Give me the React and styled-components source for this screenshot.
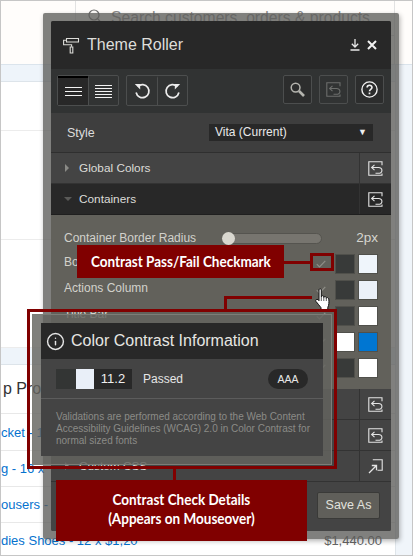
import React from "react";
import styled, { createGlobalStyle } from "styled-components";
import { Info } from "lucide-react";

const SWATCHES = [
  { label: "Body", left: "#383a39", right: "#eff5fb" },
  { label: "Actions Column", left: "#383a39", right: "#ebf1f9" },
  { label: "Title Bar", left: "#3d3f3e", right: "#ffffff" },
  { label: "", left: "#ffffff", right: "#0076d2" },
  { label: "", left: "#383a39", right: "#ffffff" },
];

const App = () => {
  return (
    <Page>
      <GlobalStyle />
      <TopBar>
        <SearchColumn>
          <SearchBox>
            <svg width="15" height="17" viewBox="0 0 15 17" fill="none" stroke="#6f6f6f" strokeWidth="1.2">
              <circle cx="7" cy="6" r="5" />
              <path d="M10.6 9.6 14 13.5" />
            </svg>
            <SearchText>Search customers, orders &amp; products</SearchText>
          </SearchBox>
        </SearchColumn>
      </TopBar>
      <Band $height={17} />
      <PageRow $height={49} />
      <PageRow $height={109} />
      <PageRow $height={108} />
      <Band $height={17} />
      <TableRow $height={49}><TitleText>p Pro</TitleText></TableRow>
      <TableRow $height={37}><LinkText>cket - 1</LinkText></TableRow>
      <TableRow $height={36}><LinkText>g - 16 x</LinkText></TableRow>
      <TableRow $height={36}><LinkText>ousers - 2</LinkText></TableRow>
      <TableRow $height={36}>
        <LinkText>dies Shoes - 12 x $1,20</LinkText>
        <Price>$1,440.00</Price>
      </TableRow>
      <SideColumn />

      <Frame>
        <Dialog>
          <Header>
            <HeaderTitle>
              <RollerIcon />
              Theme Roller
            </HeaderTitle>
            <HeaderActions>
              <DownloadIcon />
              <CloseIcon />
            </HeaderActions>
          </Header>
          <Toolbar>
            <ButtonGroup>
              <ToolButton $active>
                <LinesIcon count={3} />
              </ToolButton>
              <ToolButton>
                <LinesIcon count={5} />
              </ToolButton>
            </ButtonGroup>
            <ButtonGroup>
              <ToolButton>
                <TurnIcon />
              </ToolButton>
              <ToolButton>
                <TurnIcon $mirror />
              </ToolButton>
            </ButtonGroup>
            <ToolSpacer />
            <SquareButton>
              <MagnifierIcon />
            </SquareButton>
            <SquareButton $disabled>
              <RevertIcon size={15} color="#6c6e6c" />
            </SquareButton>
            <SquareButton>
              <HelpIcon />
            </SquareButton>
          </Toolbar>
          <StyleRow>
            <StyleLabel>Style</StyleLabel>
            <StyleSelect>
              Vita (Current)
              <SelectArrow>▼</SelectArrow>
            </StyleSelect>
          </StyleRow>
          <Section label="Global Colors" />
          <Section label="Containers" $open />
          <SectionBody>
            <RadiusRow>
              <RowLabel>Container Border Radius</RowLabel>
              <Track>
                <Thumb />
              </Track>
              <RadiusValue>2px</RadiusValue>
            </RadiusRow>
            {SWATCHES.map((row, i) => (
              <ColorRow key={i}>
                <RowLabel>{row.label}</RowLabel>
                <CheckIcon />
                <Swatch $color={row.left} />
                <Swatch $color={row.right} />
              </ColorRow>
            ))}
          </SectionBody>
          <Section label="" />
          <Section label="" />
          <Section label="Custom CSS" $external />
          <Footer>
            <SaveButton>Save As</SaveButton>
          </Footer>
        </Dialog>
      </Frame>

      <PassCallout>
        <CalloutText>Contrast Pass/Fail Checkmark</CalloutText>
      </PassCallout>
      <PassLine />
      <PassBox />

      <HoverLineH />
      <HoverLineV />
      <HandCursor />

      <InfoFrame>
        <InfoPopup>
          <InfoCard>
            <InfoHeader>
              <Info size={19} strokeWidth={1.8} color="#e6e6e6" />
              Color Contrast Information
            </InfoHeader>
            <ResultRow>
              <ResultChip>
                <ChipColor $color="#333534" $width={20} />
                <ChipColor $color="#e9eff8" $width={18} />
                <ChipValue>11.2</ChipValue>
              </ResultChip>
              <ResultText>Passed</ResultText>
              <Pill>AAA</Pill>
            </ResultRow>
            <InfoNote>
              Validations are performed according to the Web Content
              Accessibility Guidelines (WCAG) 2.0 in Color Contrast
              for normal sized fonts
            </InfoNote>
          </InfoCard>
        </InfoPopup>
      </InfoFrame>

      <DetailLine />
      <DetailCallout>
        <CalloutText>
          Contrast Check Details
          <br />
          (Appears on Mouseover)
        </CalloutText>
      </DetailCallout>
    </Page>
  );
};

export default App;

const Section = ({ label, $open, $external }) => (
  <SectionRow $open={$open}>
    <SectionTitle>
      <Caret $open={$open} />
      {label}
    </SectionTitle>
    <SectionAction>
      {$external ? <ExternalIcon /> : <RevertIcon size={15} color="#e4e4e4" />}
    </SectionAction>
  </SectionRow>
);

const RollerIcon = () => (
  <svg width="17" height="17" viewBox="0 0 17 17" fill="none" stroke="#dcdcd8" strokeWidth="1.1">
    <path d="M3.5 1.5h12v3.5h-12zM3.5 3.2H.6v4.6h8v2" />
    <path d="M7.2 10h2.6v6H7.200z" />
  </svg>
);

const DownloadIcon = () => (
  <svg width="10" height="12" viewBox="0 0 10 12" fill="none" stroke="#e8e8e8" strokeWidth="1.3">
    <path d="M5 0v7.500M1.800 4.800 5 8l3.200-3.200M.5 11h9" />
  </svg>
);

const CloseIcon = () => (
  <svg width="10" height="10" viewBox="0 0 10 10" fill="none" stroke="#f2f2f2" strokeWidth="2">
    <path d="M1 1l8 8M9 1l-8 8" />
  </svg>
);

const LinesIcon = ({ count }) => {
  const gap = count === 3 ? 4 : 3.2;
  return (
    <svg width="17" height="17" viewBox="0 0 17 17" stroke="#f2f2f2" strokeWidth="1">
      {Array.from({ length: count }).map((_, i) => {
        const y = Math.round(8 + (i - (count - 1) / 2) * gap) + 0.5;
        return <path key={i} d={`M0 ${y}h17`} />;
      })}
    </svg>
  );
};

const TurnIcon = ({ $mirror }) => (
  <svg
    width="17"
    height="17"
    viewBox="0 0 17 17"
    fill="none"
    stroke="#ececec"
    strokeWidth="1.700"
    style={$mirror ? { transform: "scaleX(-1)" } : undefined}
  >
    <path d="M3.800 3.600A6.500 6.500 0 1 1 2.100 9.500" />
    <path d="M.8 1h5.400v5.400z" fill="#ececec" stroke="none" />
  </svg>
);

const MagnifierIcon = () => (
  <svg width="15" height="15" viewBox="0 0 15 15" fill="none" stroke="#b4b4ae" strokeWidth="1.500">
    <circle cx="5.600" cy="5.600" r="4.400" />
    <path d="M9 9l5 5" strokeWidth="2.600" />
  </svg>
);

const RevertIcon = ({ size, color }) => (
  <svg width={size} height={size} viewBox="0 0 15 15" fill="none" stroke={color} strokeWidth="1.100">
    <path d="M14 4.200V.8H.8v13.400H14v-1.700" />
    <path d="M6.500 3.800 3.600 6.500l2.900 2.700M3.800 6.500h6.700c4.600 0 4.600 5.800-.3 5.800H7.500" />
  </svg>
);

const ExternalIcon = () => (
  <svg width="15" height="15" viewBox="0 0 15 15" fill="none" stroke="#e4e4e4" strokeWidth="1.100">
    <path d="M4.800.8h9.400v10.400H9.500" />
    <path d="M1 14 8.500 6.500M3.800 6.500h4.700v4.700" strokeWidth="1.300" />
  </svg>
);

const HelpIcon = () => (
  <svg width="17" height="17" viewBox="0 0 17 17" fill="none" stroke="#f0f0f0" strokeWidth="1.400">
    <circle cx="8.500" cy="8.500" r="7.600" />
    <path d="M6.100 6.600c0-3.100 4.900-3.100 4.900 0 0 1.900-2.500 1.800-2.500 3.700" strokeWidth="1.600" />
    <path d="M8.500 11.500v1.800" strokeWidth="1.700" />
  </svg>
);

const CheckIcon = () => (
  <CheckWrap>
    <svg width="10" height="8" viewBox="0 0 10 8" fill="none" stroke="#8f8e88" strokeWidth="1.200">
      <path d="M.8 4.200 3.500 7 9.300.8" />
    </svg>
  </CheckWrap>
);

const HandCursor = () => (
  <HandWrap>
    <svg width="18" height="24" viewBox="0 0 18 24" fill="#fff" stroke="#111" strokeWidth="1">
      <path d="M4 1.800c0-1.400 2.300-1.400 2.300 0v7c.2-1.500 2.400-1.500 2.500 0v.7c.2-1.300 2.300-1.300 2.500.2v.7c.3-1.200 2.400-1 2.500.5.300 3.600.2 6-1 8.500v2.800H6v-2.500C4.500 18 3 15.500 1 13.500c-1-1.500.8-2.800 2-1.800l1 1z" />
      <path d="M6.300 9v4M8.800 9.500V13M11.300 10.400V13" strokeWidth=".7" />
    </svg>
  </HandWrap>
);

const GlobalStyle = createGlobalStyle`
  html, body {
    margin: 0;
    padding: 0;
    background: #fff;
  }
  * {
    box-sizing: border-box;
  }
`;

const Page = styled.div`
  position: relative;
  width: 413px;
  height: 556px;
  overflow: hidden;
  background: #fff;
  outline: 1px solid #c6c6c6;
  outline-offset: -1px;
  font-family: "Liberation Sans", Arial, sans-serif;
`;
const TopBar = styled.div`
  height: 65px;
  padding-left: 75px;
  background: #fffdfb;
  border-bottom: 1px solid #dbe4ec;
`;
const SearchColumn = styled.div`
  width: 320px;
  height: 100%;
  border-left: 1px solid #e2e2e2;
  border-right: 1px solid #e2e2e2;
`;
const SearchBox = styled.div`
  height: 36px;
  display: flex;
  align-items: flex-start;
  gap: 9px;
  padding: 9px 0 0 11px;
  border-bottom: 1px solid #d9d9d9;
`;
const SearchText = styled.span`
  font-size: 15.700px;
  line-height: 18px;
  white-space: nowrap;
  color: #8a8a8a;
`;
const Band = styled.div`
  height: ${(props) => props.$height}px;
  background: #eef4fa;
  border-bottom: 1px solid #dde4ea;
`;
const PageRow = styled.div`
  height: ${(props) => props.$height}px;
  border-bottom: 1px solid #ececec;
`;
const TableRow = styled.div`
  height: ${(props) => props.$height}px;
  display: flex;
  align-items: center;
  justify-content: space-between;
  padding: 0 31px 0 1px;
  border-bottom: 1px solid #e8e8e8;
`;
const TitleText = styled.span`
  padding-left: 2px;
  font-size: 16px;
  color: #333;
`;
const LinkText = styled.span`
  font-size: 13px;
  color: #0572ce;
  white-space: nowrap;
`;
const Price = styled.span`
  font-size: 13px;
  color: #666;
`;
const SideColumn = styled.div`
  position: absolute;
  left: 395px;
  top: 65px;
  bottom: 1px;
  width: 17px;
  background: #f0f5fa;
  border-left: 1px solid #dfe5ea;
`;
const Frame = styled.div`
  position: absolute;
  left: 43px;
  top: 13px;
  width: 356px;
  height: 526px;
  padding: 8px;
  border-radius: 2px;
  background: rgba(92, 92, 90, 0.78);
  box-shadow: 1px 2px 5px rgba(0, 0, 0, 0.3);
`;
const Dialog = styled.div`
  width: 340px;
  height: 510px;
  display: flex;
  flex-direction: column;
  overflow: hidden;
  background: #444;
  border-radius: 2px;
`;
const Header = styled.div`
  height: 48px;
  flex: none;
  display: flex;
  align-items: center;
  justify-content: space-between;
  padding: 0 14px 0 12px;
  background: #282828;
`;
const HeaderTitle = styled.div`
  display: flex;
  align-items: center;
  gap: 7px;
  font-size: 16px;
  color: #dededa;
`;
const HeaderActions = styled.div`
  display: flex;
  align-items: center;
  gap: 7px;
`;
const Toolbar = styled.div`
  height: 44px;
  flex: none;
  display: flex;
  align-items: flex-start;
  gap: 7px;
  padding: 6px 7px 0 6px;
  background: #313333;
`;
const ToolSpacer = styled.div`
  flex: 1;
`;
const ButtonGroup = styled.div`
  display: flex;
  height: 31px;
  border: 1px solid #4c4e4e;
  border-radius: 2px;
  & > * + * {
    border-left: 1px solid #4c4e4e;
  }
`;
const ToolButton = styled.div`
  width: 30px;
  display: flex;
  align-items: center;
  justify-content: center;
  background: ${(props) => (props.$active ? "#282828" : "transparent")};
  border-top: 2px solid ${(props) => (props.$active ? "#000" : "transparent")};
`;
const SquareButton = styled.div`
  width: 29px;
  height: 29px;
  display: flex;
  align-items: center;
  justify-content: center;
  border: 1px solid #4c4e4e;
  border-radius: 2px;
  background: ${(props) => (props.$disabled ? "transparent" : "#2c2d2d")};
`;
const StyleRow = styled.div`
  height: 40px;
  flex: none;
  display: flex;
  align-items: center;
  justify-content: space-between;
  padding: 0 18px 0 16px;
  background: #3e3e3e;
  border-bottom: 1px solid #2f2f2f;
`;
const StyleLabel = styled.span`
  font-size: 12.500px;
  color: #dcdcdc;
`;
const StyleSelect = styled.div`
  position: relative;
  width: 164px;
  height: 17px;
  padding-left: 6px;
  font-size: 12px;
  line-height: 16px;
  color: #e8e8e8;
  background: #282828;
`;
const SelectArrow = styled.span`
  position: absolute;
  right: 6px;
  top: 0;
  font-size: 9px;
  color: #eee;
`;
const SectionRow = styled.div`
  height: 31px;
  flex: none;
  display: flex;
  background: ${(props) => (props.$open ? "#282828" : "#444")};
  border-bottom: 1px solid ${(props) => (props.$open ? "#1f1f1f" : "#333")};
`;
const SectionTitle = styled.div`
  flex: 1;
  display: flex;
  align-items: center;
  padding-left: 13px;
  font-size: 11.800px;
  color: #dcdcd8;
`;
const Caret = styled.span`
  width: 0;
  height: 0;
  margin-right: ${(props) => (props.$open ? "7px" : "10px")};
  border-style: solid;
  border-color: transparent;
  ${(props) =>
    props.$open
      ? `
    border-width: 4px 4px 0 4px;
    border-top-color: #5a5a58;
    margin-left: 0;
  `
      : `
    border-width: 4px 0 4px 4px;
    border-left-color: #8a8a86;
    margin-left: 1px;
  `}
`;
const SectionAction = styled.div`
  width: 32px;
  display: flex;
  align-items: center;
  justify-content: center;
  border-left: 1px solid #333;
`;
const SectionBody = styled.div`
  height: 174px;
  flex: none;
  padding: 15px 13px 0 13px;
  background: #62615b;
`;
const RadiusRow = styled.div`
  height: 24px;
  display: flex;
  align-items: flex-start;
  margin-bottom: 0;
`;
const RowLabel = styled.span`
  flex: 1;
  font-size: 12px;
  line-height: 16px;
  white-space: nowrap;
  color: #d2d1cb;
`;
const Track = styled.div`
  position: relative;
  width: 100px;
  height: 11px;
  margin: 3px 21px 0 0;
  background: #77756f;
  border: 1px solid #55544f;
  border-radius: 6px;
`;
const Thumb = styled.div`
  position: absolute;
  left: -1px;
  top: -2px;
  width: 13px;
  height: 13px;
  border-radius: 50%;
  background: #d9d7cf;
`;
const RadiusValue = styled.span`
  width: 35px;
  font-size: 13.500px;
  line-height: 16px;
  text-align: right;
  color: #d6d5cf;
`;
const ColorRow = styled.div`
  height: 26px;
  display: flex;
  align-items: flex-start;
  gap: 3px;
`;
const CheckWrap = styled.span`
  width: 20px;
  height: 19px;
  display: flex;
  align-items: center;
  justify-content: center;
  margin-right: 1px;
`;
const Swatch = styled.span`
  width: 20px;
  height: 20px;
  background: ${(props) => props.$color};
  border: 1px solid #50504b;
`;
const Footer = styled.div`
  flex: 1;
  display: flex;
  align-items: flex-start;
  justify-content: flex-end;
  padding: 10px 11px 0 0;
  background: #444;
`;
const SaveButton = styled.div`
  width: 63px;
  height: 27px;
  font-size: 12.500px;
  line-height: 25px;
  text-align: center;
  color: #e2e2de;
  background: #605f5a;
  border: 1px solid #3a3a38;
  border-radius: 2px;
`;
const CalloutText = styled.span`
  display: inline-block;
  transform: scaleX(0.9);
  font-family: "Lato", "Liberation Sans", sans-serif;
  font-size: 15px;
  font-weight: 700;
  white-space: nowrap;
`;
const PassCallout = styled.div`
  position: absolute;
  left: 77px;
  top: 245px;
  width: 207px;
  height: 33px;
  line-height: 32px;
  text-align: center;
  color: #fff;
  background: #800000;
`;
const PassLine = styled.div`
  position: absolute;
  left: 284px;
  top: 261px;
  width: 27px;
  height: 3px;
  background: #800000;
`;
const PassBox = styled.div`
  position: absolute;
  left: 310px;
  top: 253px;
  width: 24px;
  height: 18px;
  border: 3px solid #800000;
`;
const HoverLineH = styled.div`
  position: absolute;
  left: 224px;
  top: 296px;
  width: 88px;
  height: 3px;
  background: #800000;
`;
const HoverLineV = styled.div`
  position: absolute;
  left: 224px;
  top: 296px;
  width: 3px;
  height: 14px;
  background: #800000;
`;
const HandWrap = styled.div`
  position: absolute;
  left: 315px;
  top: 288px;
  line-height: 0;
`;
const InfoFrame = styled.div`
  position: absolute;
  left: 27px;
  top: 309px;
  width: 310px;
  height: 160px;
  padding: 2px;
  border: 3px solid #800000;
`;
const InfoPopup = styled.div`
  width: 300px;
  height: 151px;
  padding: 8px;
  background: rgba(100, 100, 95, 0.82);
  border: 1px solid #7d7d77;
`;
const InfoCard = styled.div`
  height: 100%;
  background: #444;
`;
const InfoHeader = styled.div`
  height: 36px;
  display: flex;
  align-items: center;
  gap: 6px;
  padding-left: 5px;
  font-size: 16px;
  color: #e6e6e2;
  background: #282828;
`;
const ResultRow = styled.div`
  height: 40px;
  display: flex;
  align-items: center;
  padding: 0 15px;
  border-bottom: 1px solid #5c5c5c;
`;
const ResultChip = styled.div`
  display: flex;
  height: 20px;
  width: 76px;
`;
const ChipColor = styled.span`
  width: ${(props) => props.$width}px;
  background: ${(props) => props.$color};
`;
const ChipValue = styled.span`
  flex: 1;
  font-size: 13px;
  line-height: 20px;
  text-align: center;
  color: #eee;
  background: #282828;
`;
const ResultText = styled.span`
  flex: 1;
  padding-left: 11px;
  font-size: 12px;
  color: #e6e6e6;
`;
const Pill = styled.span`
  width: 40px;
  height: 20px;
  font-size: 10.500px;
  line-height: 20px;
  text-align: center;
  color: #e6e6e6;
  background: #282828;
  border-radius: 10px;
`;
const InfoNote = styled.p`
  margin: 0;
  padding: 12px 8px 0 15px;
  font-size: 10px;
  line-height: 12px;
  color: #8b8b87;
`;
const DetailLine = styled.div`
  position: absolute;
  left: 173px;
  top: 469px;
  width: 3px;
  height: 12px;
  background: #800000;
`;
const DetailCallout = styled.div`
  position: absolute;
  left: 56px;
  top: 480px;
  width: 251px;
  height: 61px;
  padding-top: 10px;
  line-height: 19px;
  text-align: center;
  color: #fff;
  background: #800000;
`;
